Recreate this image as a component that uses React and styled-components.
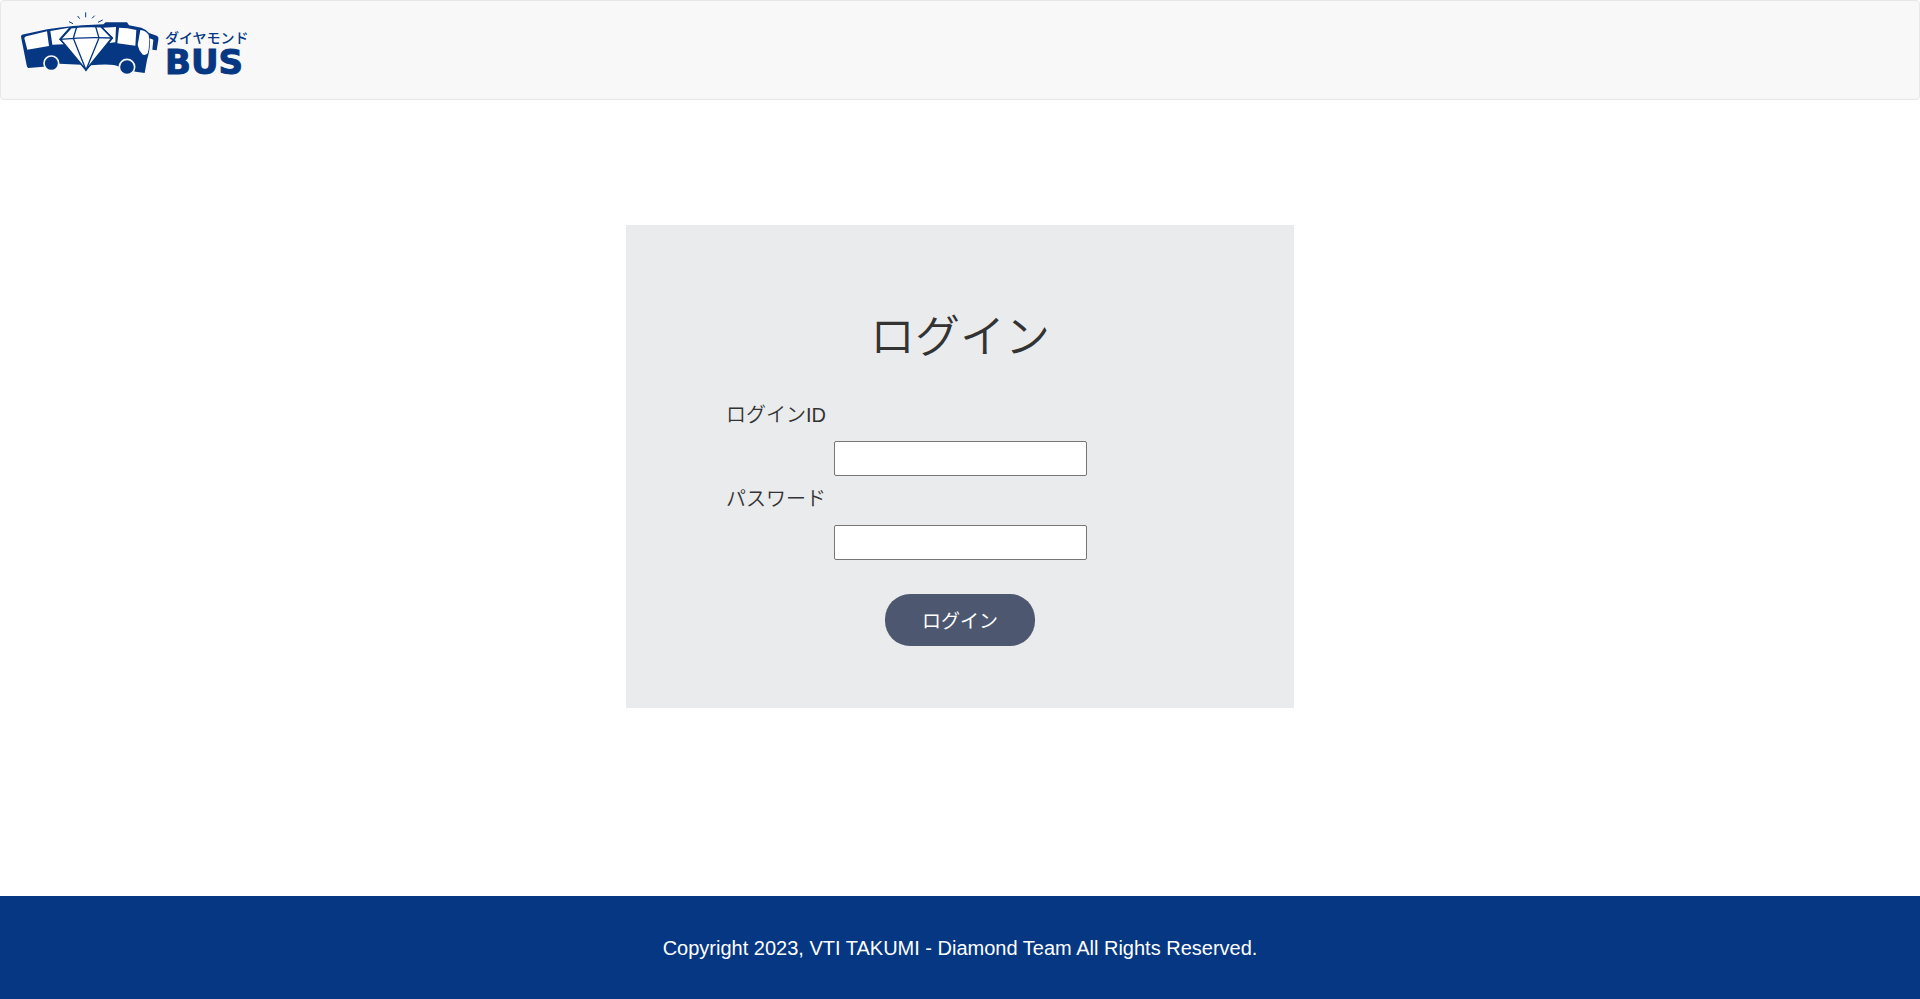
import React from "react";
import styled, { createGlobalStyle } from "styled-components";

const navy = "#053782";

const GlobalStyle = createGlobalStyle`
  *, *::before, *::after { box-sizing: border-box; }
  body {
    margin: 0;
    background: #fff;
    color: #333;
    font-family: "Liberation Sans", "Noto Sans CJK JP", sans-serif;
    font-size: 20px;
    line-height: 28px;
  }
`;

const Page = styled.div`
  display: flex;
  flex-direction: column;
  min-height: 100vh;
`;

const Navbar = styled.header`
  display: flex;
  align-items: flex-start;
  min-height: 100px;
  padding: 9px 19px;
  border: 1px solid #e7e7e7;
  border-radius: 4px;
  background: #f8f8f8;
`;

const Brand = styled.a`
  display: flex;
  gap: 5px;
  color: ${navy};
  text-decoration: none;
`;

const BusDrawing = styled.svg`
  display: block;
  width: 140px;
  height: 67px;
`;

const BrandText = styled.span`
  display: flex;
  flex-direction: column;
  padding-top: 17px;
`;

const BrandKana = styled.span`
  font: 500 14px/20px "Noto Sans CJK JP", sans-serif;
`;

const BrandName = styled.span`
  font: 700 34px/30px "DejaVu Sans", sans-serif;
  -webkit-text-stroke: 1px ${navy};
`;

const Main = styled.main`
  flex: 1;
  display: flex;
  justify-content: center;
  align-items: flex-start;
  padding: 125px 16px 100px;
`;

const LoginForm = styled.form`
  display: flex;
  flex-direction: column;
  align-items: center;
  width: 668px;
  max-width: 100%;
  padding: 83px 100px 62px;
  background: #eaebed;
`;

const Title = styled.h1`
  margin: 0 0 33px;
  font-size: 45px;
  font-weight: 350;
  line-height: 60px;
`;

const Field = styled.div`
  display: flex;
  flex-direction: column;
  align-items: center;
  align-self: stretch;
  height: 84px;
`;

const Label = styled.label`
  align-self: flex-start;
  margin-bottom: 12px;
  font-weight: 350;
`;

const Input = styled.input`
  width: 253px;
  max-width: 100%;
  height: 35px;
  padding: 1px 8px;
  border: 1px solid #767676;
  border-radius: 2px;
  background: #fff;
  font: inherit;
`;

const SubmitButton = styled.button`
  width: 150px;
  height: 52px;
  margin-top: 25px;
  padding: 0 0 2px;
  border: 0;
  border-radius: 25px;
  background: #4d5870;
  color: #fff;
  font-family: inherit;
  font-size: 19px;
  cursor: pointer;
`;

const Footer = styled.footer`
  display: flex;
  justify-content: center;
  align-items: center;
  min-height: 103px;
  padding: 16px;
  background: ${navy};
  color: #fff;
  text-align: center;
`;

const Copyright = styled.p`
  margin: 0;
`;

function Bus() {
  return (
    <BusDrawing viewBox="60 30 420 201" aria-hidden="true">
      <path
        fill={navy}
        d="M63 110Q63 104 72 103L142 88Q215 76 310 73L317 67H381L387 76L424 83Q438 88 447 99L472 108Q477 112 475 120L470 151L457 149L460 119L449 115Q453 140 441 180L434 219L407 215L357 200Q340 190 272 196L258 211L244 194L178 191L130 200L85 204Q81 204 80 196Z"
      />
      <g fill="#fff">
        <path d="M73 115Q74 110 79 109L141 94L147 138L82 149Z" />
        <path d="M151 93L207 83L177 118L192 133L157 134Z" />
        <path d="M309 83L348 81L346 127L328 129L340 114Z" />
        <path d="M357 83Q382 83 409 90L406 137L352 130Z" />
        <path d="M421 90Q438 91 446 105Q451 131 443 160Q435 168 427 163Q416 151 413 135Z" />
      </g>
      <path
        fill="#fff"
        stroke={navy}
        strokeWidth="5"
        strokeLinejoin="round"
        d="M213 83Q258 77 303 80L336 114L258 210L181 118Z"
      />
      <path
        fill="none"
        stroke={navy}
        strokeWidth="4"
        d="M181 118Q258 110 336 114M230 81L220 115L258 210L297 114L287 80"
      />
      <g fill={navy} stroke="#f8f8f8" strokeWidth="5">
        <circle cx="154" cy="190" r="22" />
        <circle cx="381" cy="201" r="23" />
      </g>
      <path
        fill="none"
        stroke={navy}
        strokeWidth="3"
        d="M207 65L219 71M233 48L239 56M257 37V52M284 47L276 55M308 60L294 67"
      />
    </BusDrawing>
  );
}

export default function App() {
  return (
    <Page lang="ja">
      <GlobalStyle />
      <Navbar>
        <Brand href="#">
          <Bus />
          <BrandText>
            <BrandKana>ダイヤモンド</BrandKana>
            <BrandName>BUS</BrandName>
          </BrandText>
        </Brand>
      </Navbar>
      <Main>
        <LoginForm onSubmit={(event) => event.preventDefault()}>
          <Title>ログイン</Title>
          <Field>
            <Label htmlFor="login-id">ログインID</Label>
            <Input id="login-id" type="text" autoComplete="username" />
          </Field>
          <Field>
            <Label htmlFor="password">パスワード</Label>
            <Input id="password" type="password" autoComplete="current-password" />
          </Field>
          <SubmitButton type="submit">ログイン</SubmitButton>
        </LoginForm>
      </Main>
      <Footer>
        <Copyright>Copyright 2023, VTI TAKUMI - Diamond Team All Rights Reserved.</Copyright>
      </Footer>
    </Page>
  );
}
